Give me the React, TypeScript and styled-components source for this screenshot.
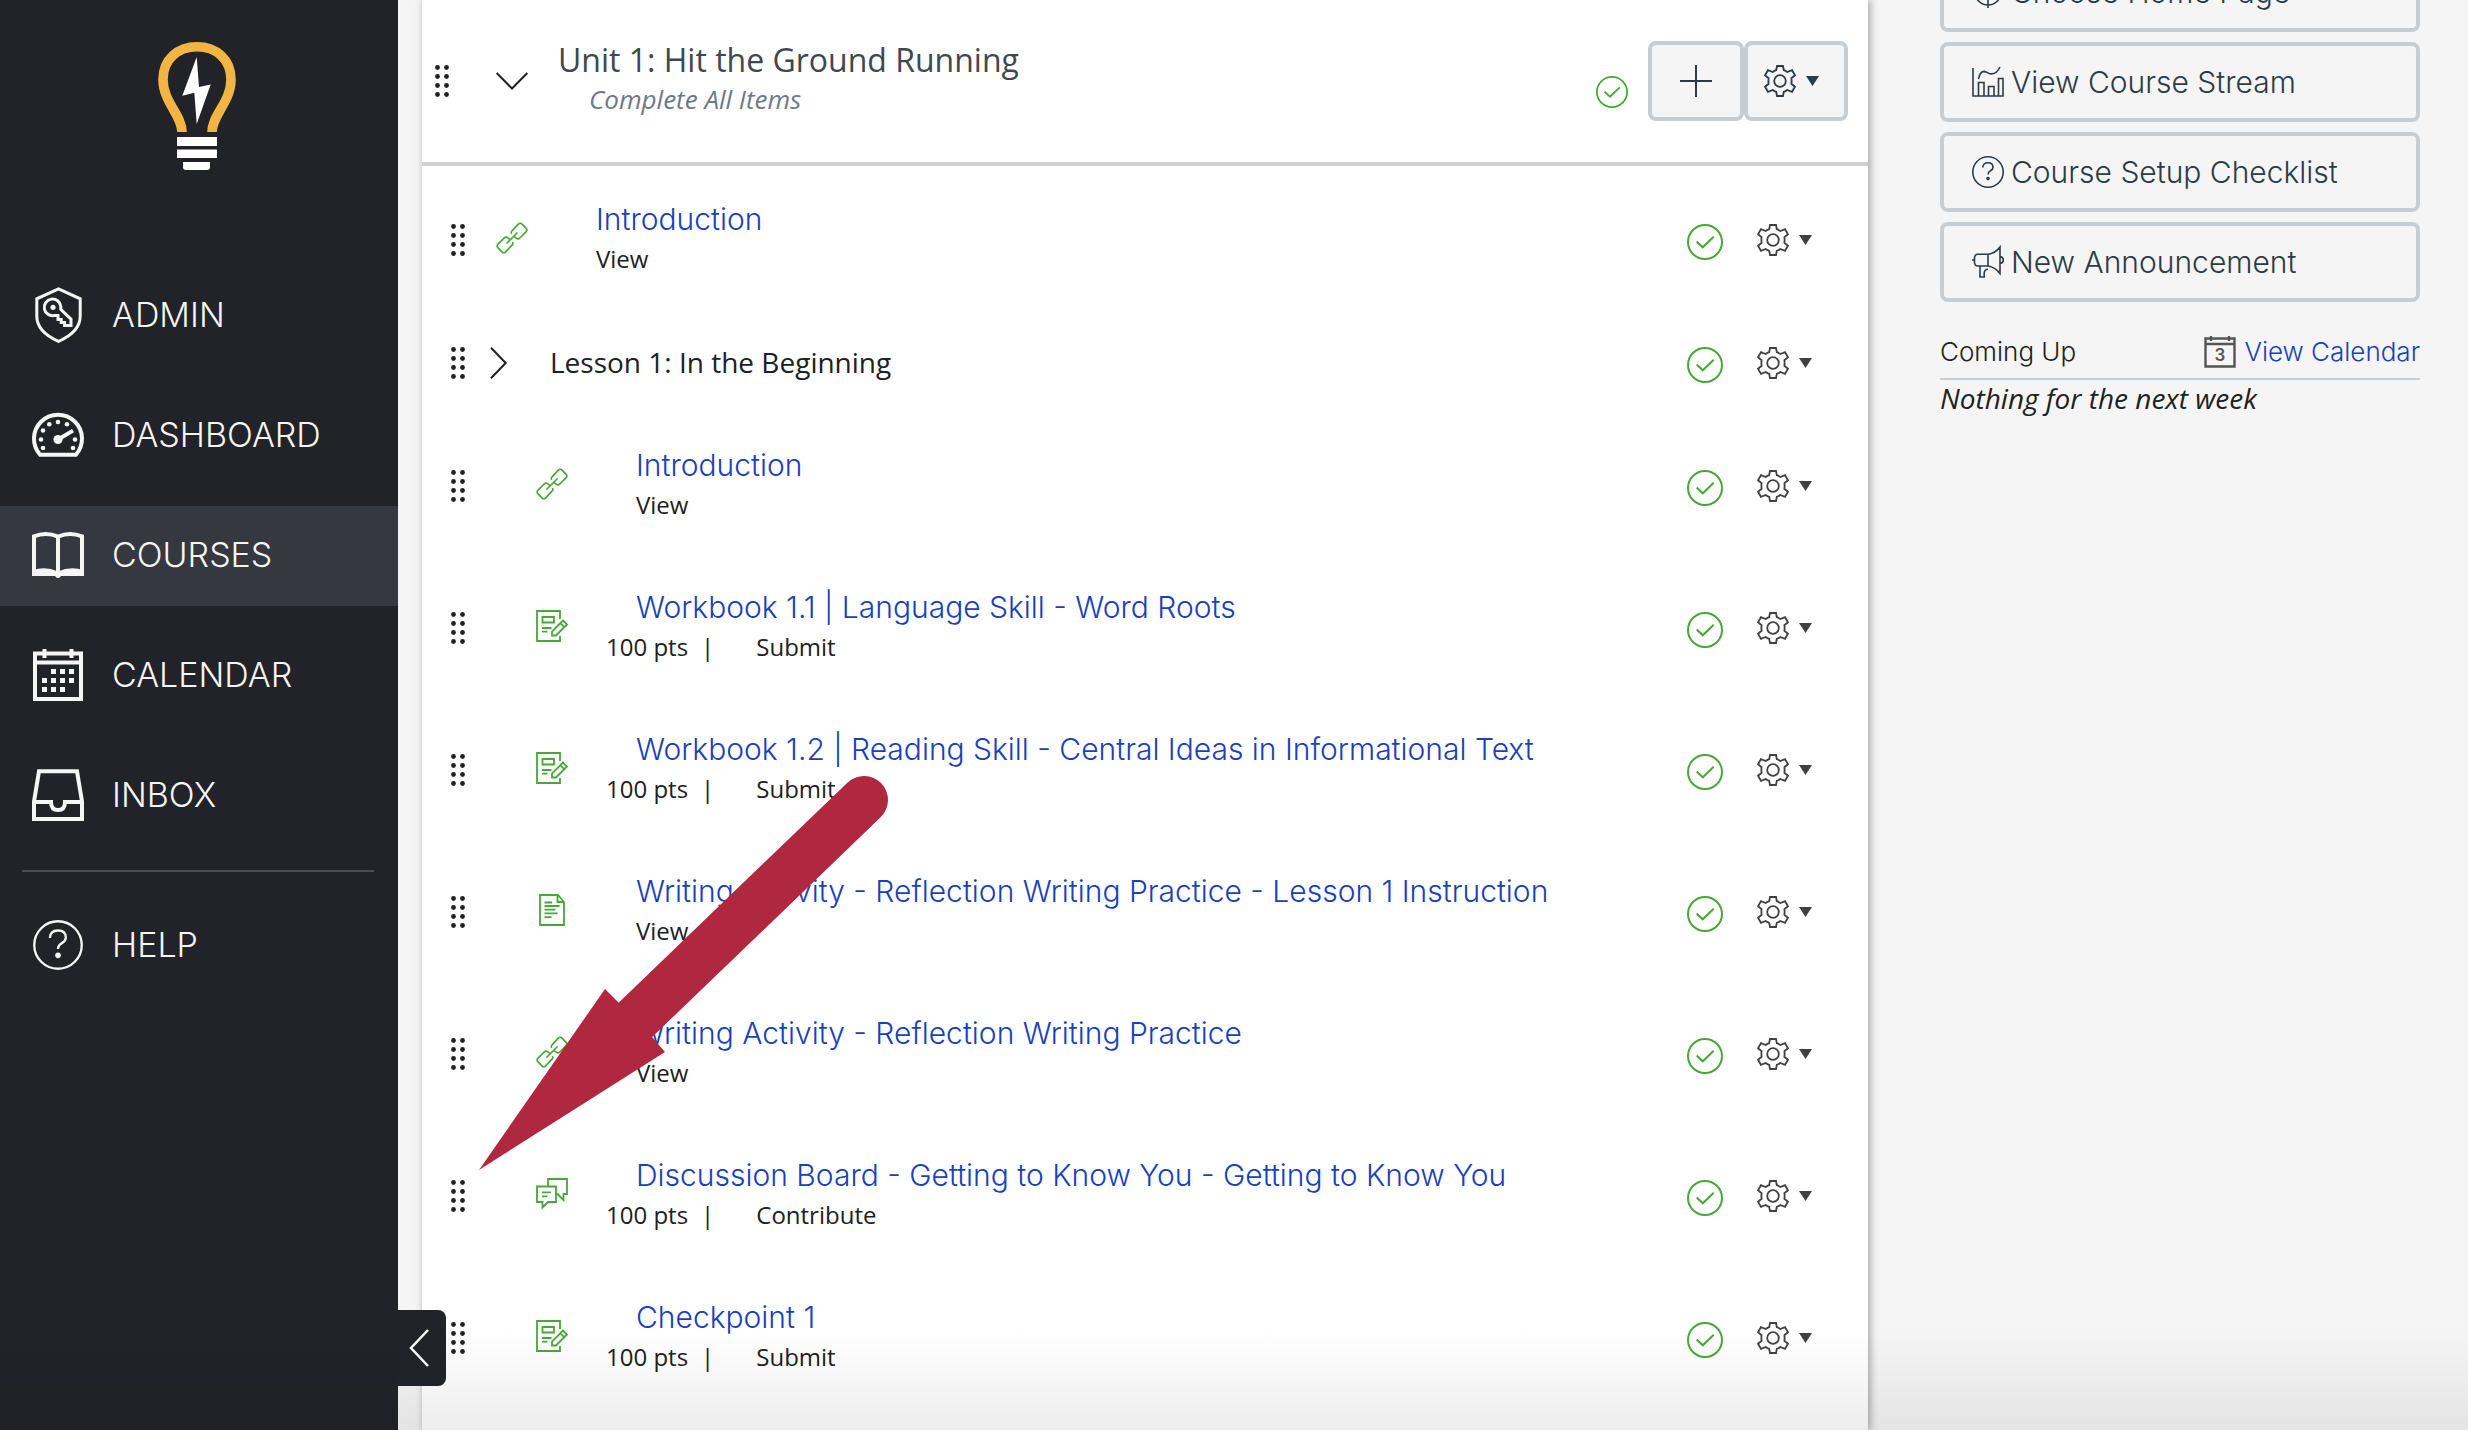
import React from "react";
import styled, { createGlobalStyle } from "styled-components";

const INK = "#202122";
const SLATE = "#2d3b45";
const GREEN = "#47a838";
const LINK = "#1a40bc";
const DARK = "#222328";
const SANS = `"Open Sans", "Noto Sans", sans-serif`;
const DISPLAY = `Inter, "Open Sans", sans-serif`;

const GlobalStyle = createGlobalStyle`
  * { box-sizing: border-box; }
  body {
    margin: 0;
    background: #f5f5f5;
    color: ${INK};
    font-family: ${SANS};
  }
  button { font: inherit; color: inherit; cursor: pointer; }
  a { text-decoration: none; }
  svg { display: block; flex: none; overflow: visible; }
`;

/* ---------- page frame ---------- */

const Page = styled.div`
  position: relative;
  display: flex;
  height: 100vh;
  overflow: hidden;
`;

const Sidebar = styled.nav`
  flex: none;
  width: 398px;
  background: ${DARK};
  color: #f5f5f5;
`;

const Logo = styled.a`
  display: flex;
  justify-content: center;
  padding: 42px 4px 96px 0;
`;

const NavList = styled.ul`
  display: grid;
  gap: 20px;
  margin: 0;
  padding: 0;
  list-style: none;
`;

const NavLink = styled.a<{ $active?: boolean }>`
  display: grid;
  grid-template-columns: 52px 1fr;
  align-items: center;
  column-gap: 28px;
  height: 100px;
  padding: 0 24px 2px 32px;
  color: inherit;
  background: ${(p) => (p.$active ? "#363840" : "transparent")};
  font: 300 34px/40px ${DISPLAY};
  text-transform: uppercase;
`;

const NavIcon = styled.span`
  display: flex;
  justify-content: center;
`;

const NavRule = styled.hr`
  margin: 24px 24px 24px 22px;
  border: 0;
  border-top: 2px solid #4b4c50;
`;

const Main = styled.main`
  display: flex;
  align-items: stretch;
  flex: 1;
  min-width: 0;
  padding: 0 48px 0 24px;
  gap: 72px;
`;

const Panel = styled.section`
  flex: 1;
  min-width: 0;
  background: #fff;
  box-shadow: 2px 0 8px rgba(0, 0, 0, 0.35);
`;

/* ---------- module ---------- */

const ModuleHeader = styled.header`
  display: flex;
  align-items: center;
  height: 166px;
  padding: 0 20px 0 13px;
  border-bottom: 4px solid #d0d0d0;
`;

const IconButton = styled.button<{ $gap?: number }>`
  display: flex;
  align-items: center;
  gap: 10px;
  margin: 0 0 0 ${(p) => p.$gap ?? 0}px;
  padding: 0;
  border: 0;
  background: none;
  color: ${(p) => p.color ?? INK};
`;

const ModuleTitles = styled.div`
  flex: 1;
  min-width: 0;
  padding: 0 0 8px 30px;
`;

const ModuleTitle = styled.h2`
  margin: 0;
  color: #3f474f;
  font: 400 32px/44px ${SANS};
`;

const Requirement = styled.p`
  margin: 0;
  padding-left: 31px;
  color: #6f7888;
  font: italic 400 26px/34px ${SANS};
`;

const HeaderStatus = styled.span`
  padding: 22px 20px 0 0;
`;

const BoxButton = styled.button<{ $width: number; $menu?: boolean }>`
  display: flex;
  align-items: center;
  justify-content: center;
  gap: 10px;
  width: ${(p) => p.$width}px;
  height: 80px;
  padding: 0 ${(p) => (p.$menu ? 10 : 0)}px 0 0;
  border: 4px solid #c7cdd1;
  border-radius: 8px;
  background: #f5f5f5;
  color: ${SLATE};
`;

const Items = styled.ul`
  margin: 0;
  padding: 3px 0 0;
  list-style: none;
`;

const Row = styled.li<{ $short?: boolean }>`
  display: flex;
  align-items: center;
  height: ${(p) => (p.$short ? 104 : 142)}px;
  padding: 0 56px 0 29px;
`;

const RowIcon = styled.span<{ $nested: boolean }>`
  display: flex;
  justify-content: center;
  width: 32px;
  margin-left: ${(p) => (p.$nested ? 71 : 31)}px;
  padding-bottom: 4px;
  color: ${GREEN};
`;

const RowText = styled.div`
  flex: 1;
  min-width: 0;
  padding: 0 0 2px 38px;
`;

const ItemLink = styled.a`
  display: block;
  padding-left: 30px;
  color: ${LINK};
  font: 300 30px/40px ${DISPLAY};
`;

const Meta = styled.div<{ $indent: boolean }>`
  display: flex;
  padding-left: ${(p) => (p.$indent ? 30 : 0)}px;
  font: 400 24px/40px ${SANS};
`;

const Divider = styled.span`
  padding: 0 42px 0 13px;
`;

const Subheading = styled.h3`
  flex: 1;
  min-width: 0;
  margin: 0;
  padding: 0 0 2px 43px;
  font: 400 28px/40px ${SANS};
`;

const RowStatus = styled.span`
  padding-top: 4px;
`;

/* ---------- right column ---------- */

const Aside = styled.aside`
  flex: none;
  width: 480px;
  margin-top: -48px;
`;

const Actions = styled.div`
  display: grid;
  gap: 10px;
`;

const ActionButton = styled.button`
  display: flex;
  align-items: center;
  gap: 7px;
  height: 80px;
  padding: 0 28px;
  border: 4px solid #c7cdd1;
  border-radius: 8px;
  background: #f5f5f5;
  color: ${SLATE};
  font: 300 30px/40px ${DISPLAY};
  text-align: left;
`;

const ComingUp = styled.div`
  display: flex;
  align-items: center;
  justify-content: space-between;
  margin-top: 24px;
  padding: 6px 0;
  border-bottom: 2px solid #c7cdd1;
`;

const ComingTitle = styled.h2`
  margin: 0;
  font: 300 26px/40px ${DISPLAY};
`;

const CalendarLink = styled.a`
  display: flex;
  align-items: center;
  gap: 8px;
  color: ${LINK};
  font: 300 26px/40px ${DISPLAY};
`;

const Nothing = styled.p`
  margin: 0;
  font: italic 400 28px/36px ${SANS};
`;

/* ---------- overlays ---------- */

const Collapse = styled.button`
  position: absolute;
  left: 398px;
  bottom: 44px;
  display: flex;
  align-items: center;
  justify-content: center;
  width: 48px;
  height: 76px;
  padding: 0 6px 0 0;
  border: 0;
  border-radius: 0 8px 8px 0;
  background: ${DARK};
  color: #fff;
`;

const Pointer = styled.svg`
  position: absolute;
  left: 479px;
  top: 776px;
  color: #b02840;
  pointer-events: none;
`;

const BottomFade = styled.div`
  position: absolute;
  inset: auto 0 0 0;
  height: 100px;
  background: linear-gradient(rgba(0, 0, 0, 0), rgba(0, 0, 0, 0.07));
  pointer-events: none;
`;

/* ---------- icons ---------- */

type IconProps = { w?: number; h?: number; vw?: number; vh?: number; sw?: number; children: React.ReactNode };

const Icon = ({ w = 32, h = 32, vw = w, vh = h, sw = 2, children }: IconProps) => (
  <svg width={w} height={h} viewBox={`0 0 ${vw} ${vh}`} fill="none" stroke="currentColor" strokeWidth={sw} aria-hidden="true">
    {children}
  </svg>
);

const Grip = () => (
  <Icon w={14} h={32}>
    <g fill="currentColor" stroke="none">
      {[2.5, 11.5].map((x) => [2.5, 11.5, 20.5, 29.5].map((y) => <circle key={`${x}-${y}`} cx={x} cy={y} r={2.4} />))}
    </g>
  </Icon>
);

const Gear = () => (
  <Icon sw={1.8}>
    <path d="M13 1H19L19.8 5.2Q21.6 5.7 23.3 7L28 5.2L31 10.3L27.4 13.2Q27.8 16 27.4 18.8L31 21.7L28 26.8L23.3 25Q21.6 26.3 19.8 26.8L19 31H13L12.2 26.8Q10.4 26.3 8.7 25L4 26.8L1 21.7L4.6 18.8Q4.2 16 4.6 13.2L1 10.3L4 5.2L8.7 7Q10.4 5.7 12.2 5.2Z" />
    <circle cx="16" cy="16" r="5.8" />
  </Icon>
);

const Caret = () => (
  <Icon w={13} h={10}>
    <path d="M0 0H13L6.5 10Z" fill="currentColor" stroke="none" />
  </Icon>
);

const Published = ({ size }: { size: number }) => (
  <svg width={size} height={size} viewBox="0 0 36 36" fill="none" stroke={GREEN} strokeWidth="2" role="img" aria-label="Published">
    <circle cx="18" cy="18" r="17" />
    <path d="M9.7 17.5L15.8 23.3L26.7 12.7" />
  </svg>
);

const LinkIcon = () => (
  <Icon sw={1.7}>
    <path d="M15.6 12C14.8 10.8 15 9.8 16 8.8L22.3 2.2Q24.2.3 26 2.2L30 6.2Q31.8 8 30 9.8L23.8 16Q22 17.6 20.2 16.2L18.2 14.6" />
    <path d="M16.4 20C17.2 21.2 17 22.2 16 23.2L9.7 29.8Q7.8 31.7 6 29.8L2 25.8Q.2 24 2 22.2L8.2 16Q10 14.4 11.8 15.8L13.8 17.4" />
    <path d="M10.5 21.5L21.5 10.5" />
  </Icon>
);

const AssignmentIcon = () => (
  <Icon sw={1.8}>
    <path d="M24 9V1H1V31H24V26M6.5 7H18V12.5H6.5ZM6 18H15.5M6 21.7H11.5" />
    <path d="M27 10.5L31 14.5L20 25.5H16V21.5ZM24.3 13.2L28.3 17.2" />
  </Icon>
);

const PageIcon = () => (
  <Icon w={26} h={32} sw={1.8}>
    <path d="M1 1H19L25 8V31H1ZM18.5 1V8H25M5.5 8.5H13M5.5 12H20.5M5.5 15.7H16.5M5.5 19.3H18.5M5.5 23.2H12.5" />
  </Icon>
);

const DiscussionIcon = () => (
  <Icon sw={1.8}>
    <path d="M12 8V1H31V16H27.5V22L21 15.5M1 8.5H20V24H12L6.5 29.5V24H1ZM6 14.3H15M6 18.3H11.5" />
  </Icon>
);

const HelpIcon = ({ size = 32, sw = 1.6 }: { size?: number; sw?: number }) => (
  <Icon w={size} h={size} vw={32} vh={32} sw={sw}>
    <circle cx="16" cy="16" r="15.2" />
    <path d="M10.8 11.5Q11 6.7 16 6.7Q21 6.7 21 11.2Q21 13.4 18.5 14.8Q16 16.2 16 18.6" />
    <circle cx="16" cy="22.6" r="1.8" fill="currentColor" stroke="none" />
  </Icon>
);

const TargetIcon = () => (
  <Icon sw={1.6}>
    <circle cx="16" cy="16" r="13" />
    <circle cx="16" cy="16" r="5.5" />
    <path d="M16 0V9M16 24V32M0 16H9M23 16H32" />
  </Icon>
);

const StreamIcon = () => (
  <Icon sw={1.6}>
    <path d="M1 2V30H31V12.5H26.5V30M6.5 30V16.5H12V30M16.5 30V20.5H22V30M6.5 13Q8 5.2 12.5 5.4Q14.5 6 17 7.4Q24 9.5 28 1" />
  </Icon>
);

const MegaphoneIcon = () => (
  <Icon sw={1.6}>
    <path d="M16 8.3V20M16 8.3H6Q2.5 8.3 2.5 12V16Q2.5 20 6 20H16Q23 21 28 27.5V1Q23 7.5 16 8.3M0 14H2.5M28 10.5Q31.3 11 31.3 14T28 17.5M8 20V31H12.2V27Q12.5 23.2 16 23.2" />
  </Icon>
);

const CalendarDay = () => (
  <Icon sw={2.4}>
    <g color="#555" stroke="#555">
      <path d="M1.5 2.5H30.5V30.5H1.5ZM1.5 8H30.5M7 0V5M25 0V5" />
    </g>
    <text x="16" y="25" textAnchor="middle" fill="#555" stroke="none" fontFamily="Inter, sans-serif" fontSize="17" fontWeight="600">
      3
    </text>
  </Icon>
);

const AdminIcon = () => (
  <Icon w={47} h={56} sw={3}>
    <path d="M23.5 1.8L45.2 11.8V29Q45.2 45 23.5 54.3Q1.8 45 1.8 29V11.8Z" />
    <path d="M25.8 22.3L36 32.2V38.6H29.6V35.4H26.2V32.4H23V28.4H19.5A8.3 8.3 0 1 1 25.8 19.5Z" />
    <circle cx="18" cy="20.3" r="2.6" fill="currentColor" stroke="none" />
  </Icon>
);

const GAUGE_DOTS = [[11, 35], [9, 26.5], [11, 17.5], [17.3, 11.3], [26, 9], [35, 11.3], [43, 26.5], [41, 35]];

const DashboardIcon = () => (
  <Icon w={52} h={44} sw={4}>
    <path d="M8.2 41.8A24 24 0 1 1 43.8 41.8Z" />
    <path d="M26 26.5L41 17.6" />
    <g fill="currentColor" stroke="none">
      <circle cx="26" cy="26.5" r="4.6" />
      {GAUGE_DOTS.map(([x, y]) => <circle key={`${x}-${y}`} cx={x} cy={y} r={2.3} />)}
    </g>
  </Icon>
);

const BookIcon = () => (
  <Icon w={52} h={46} sw={4}>
    <path d="M2 42V4.4Q14 -.6 26 4.6Q38 -.6 50 4.4V42M26 4V43" />
    <path d="M0 38.5Q13 33.6 26 39.5Q39 33.6 52 38.5V44H29Q28 46 26 46T23 44H0Z" fill="currentColor" stroke="none" />
  </Icon>
);

const CALENDAR_DOTS = [[18, 20], [27, 20], [36, 20], [9, 29], [18, 29], [27, 29], [36, 29], [9, 38], [18, 38], [27, 38]];

const CalendarIcon = () => (
  <Icon w={50} h={52} sw={4}>
    <path d="M2 4.5H48V50H2ZM2 13.5H48M11.5 0V9M38.5 0V9" />
    <g fill="currentColor" stroke="none">
      {CALENDAR_DOTS.map(([x, y]) => <rect key={`${x}-${y}`} x={x} y={y} width="5" height="5" />)}
    </g>
  </Icon>
);

const InboxIcon = () => (
  <Icon w={52} h={52} sw={4}>
    <path d="M2 32.5L7 2.3H45L50 32.5V50H2ZM2 33H19Q19 41 26 41T33 33H50" />
  </Icon>
);

const BulbLogo = () => (
  <svg width="78" height="128" viewBox="0 0 78 128" aria-hidden="true">
    <path d="M24 90C24 73 5 60 5 37.500C5 17 20 4.700 39 4.700S73 17 73 37.500C73 60 54 73 54 90" fill="none" stroke="#f2b544" strokeWidth="9.6" />
    <path d="M38.700 15L41 45L52.700 42.500L38.700 82L36.300 50.700L24.300 53.700Z" fill="#fff" />
    <path d="M19 95H59V104H19ZM19 107.500H59V116H19ZM25 120H52V125Q52 128 49 128H28Q25 128 25 125Z" fill="#fff" />
  </svg>
);

/* ---------- data ---------- */

const NAV = [
  { label: "Admin", icon: <AdminIcon /> },
  { label: "Dashboard", icon: <DashboardIcon /> },
  { label: "Courses", icon: <BookIcon />, active: true },
  { label: "Calendar", icon: <CalendarIcon /> },
  { label: "Inbox", icon: <InboxIcon /> },
];

type Item = { kind: "link" | "assignment" | "page" | "discussion"; title: string; points?: number; action: string; nested: boolean };

const INTRO: Item = { kind: "link", title: "Introduction", action: "View", nested: false };

const LESSON: Item[] = [
  { kind: "link", title: "Introduction", action: "View", nested: true },
  { kind: "assignment", title: "Workbook 1.1 | Language Skill - Word Roots", points: 100, action: "Submit", nested: true },
  { kind: "assignment", title: "Workbook 1.2 | Reading Skill - Central Ideas in Informational Text", points: 100, action: "Submit", nested: true },
  { kind: "page", title: "Writing Activity - Reflection Writing Practice - Lesson 1 Instruction", action: "View", nested: true },
  { kind: "link", title: "Writing Activity - Reflection Writing Practice", action: "View", nested: true },
  { kind: "discussion", title: "Discussion Board - Getting to Know You - Getting to Know You", points: 100, action: "Contribute", nested: true },
  { kind: "assignment", title: "Checkpoint 1", points: 100, action: "Submit", nested: true },
];

const KIND_ICON = {
  link: <LinkIcon />,
  assignment: <AssignmentIcon />,
  page: <PageIcon />,
  discussion: <DiscussionIcon />,
};

const ACTIONS = [
  { label: "Choose Home Page", icon: <TargetIcon /> },
  { label: "View Course Stream", icon: <StreamIcon /> },
  { label: "Course Setup Checklist", icon: <HelpIcon /> },
  { label: "New Announcement", icon: <MegaphoneIcon /> },
];

const RowControls = () => (
  <>
    <RowStatus>
      <Published size={36} />
    </RowStatus>
    <IconButton $gap={34} color="#404040" aria-label="Item settings">
      <Gear />
      <Caret />
    </IconButton>
  </>
);

const ItemRow = ({ item }: { item: Item }) => (
  <Row>
    <Grip />
    <RowIcon $nested={item.nested}>{KIND_ICON[item.kind]}</RowIcon>
    <RowText>
      <ItemLink href="#">{item.title}</ItemLink>
      <Meta $indent={!item.points}>
        {item.points && (
          <>
            <span>{item.points} pts</span>
            <Divider>|</Divider>
          </>
        )}
        <span>{item.action}</span>
      </Meta>
    </RowText>
    <RowControls />
  </Row>
);

export default function App() {
  return (
    <Page>
      <GlobalStyle />
      <Sidebar>
        <Logo href="#" aria-label="Home">
          <BulbLogo />
        </Logo>
        <NavList>
          {NAV.map((n) => (
            <li key={n.label}>
              <NavLink href="#" $active={n.active}>
                <NavIcon>{n.icon}</NavIcon>
                {n.label}
              </NavLink>
            </li>
          ))}
        </NavList>
        <NavRule />
        <NavLink href="#">
          <NavIcon>
            <HelpIcon size={50} sw={1.5} />
          </NavIcon>
          Help
        </NavLink>
      </Sidebar>

      <Main>
        <Panel>
          <ModuleHeader>
            <Grip />
            <IconButton $gap={47} aria-label="Collapse unit">
              <Icon w={32} h={18}>
                <path d="M.7 1L16 16.500L31.300 1" />
              </Icon>
            </IconButton>
            <ModuleTitles>
              <ModuleTitle>Unit 1: Hit the Ground Running</ModuleTitle>
              <Requirement>Complete All Items</Requirement>
            </ModuleTitles>
            <HeaderStatus>
              <Published size={32} />
            </HeaderStatus>
            <BoxButton $width={96} aria-label="Add item">
              <Icon>
                <path d="M16 0V32M0 16H32" />
              </Icon>
            </BoxButton>
            <BoxButton $width={104} $menu aria-label="Unit settings">
              <Gear />
              <Caret />
            </BoxButton>
          </ModuleHeader>
          <Items>
            <ItemRow item={INTRO} />
            <Row $short>
              <Grip />
              <IconButton $gap={25} aria-label="Expand lesson">
                <Icon w={17} h={32}>
                  <path d="M1 .7L15.700 16L1 31.300" />
                </Icon>
              </IconButton>
              <Subheading>Lesson 1: In the Beginning</Subheading>
              <RowControls />
            </Row>
            {LESSON.map((item) => (
              <ItemRow key={item.title} item={item} />
            ))}
          </Items>
        </Panel>

        <Aside>
          <Actions>
            {ACTIONS.map((a) => (
              <ActionButton key={a.label}>
                {a.icon}
                {a.label}
              </ActionButton>
            ))}
          </Actions>
          <ComingUp>
            <ComingTitle>Coming Up</ComingTitle>
            <CalendarLink href="#">
              <CalendarDay />
              View Calendar
            </CalendarLink>
          </ComingUp>
          <Nothing>Nothing for the next week</Nothing>
        </Aside>
      </Main>

      <Pointer width="410" height="395" viewBox="0 0 410 395" aria-hidden="true">
        <path d="M150 250L385 24" stroke="currentColor" strokeWidth="48" strokeLinecap="round" />
        <path d="M0 394L126 213L140 227L173 261L186 276Z" fill="currentColor" />
      </Pointer>
      <BottomFade />
      <Collapse aria-label="Collapse navigation">
        <Icon w={20} h={38} sw={2.5}>
          <path d="M19 1L2 19L19 37" />
        </Icon>
      </Collapse>
    </Page>
  );
}
